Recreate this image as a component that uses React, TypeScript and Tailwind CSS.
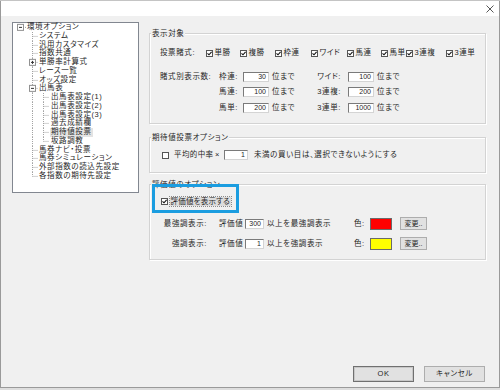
// 環境オプション dialog: tree on the left, three option groups on the right

type TreeItem = {
  label: string
  level: 0 | 1 | 2
  exp?: 'plus' | 'minus'
  last?: boolean
  selected?: boolean
}

const TREE: TreeItem[] = [
  { label: '環境オプション', level: 0, exp: 'minus' },
  { label: 'システム', level: 1 },
  { label: '汎用カスタマイズ', level: 1 },
  { label: '指数共通', level: 1 },
  { label: '単勝率計算式', level: 1, exp: 'plus' },
  { label: 'レース一覧', level: 1 },
  { label: 'オッズ設定', level: 1 },
  { label: '出馬表', level: 1, exp: 'minus' },
  { label: '出馬表設定(1)', level: 2 },
  { label: '出馬表設定(2)', level: 2 },
  { label: '出馬表設定(3)', level: 2 },
  { label: '過去成績欄', level: 2 },
  { label: '期待値投票', level: 2, selected: true },
  { label: '坂路調教', level: 2, last: true },
  { label: '馬券ナビ・投票', level: 1 },
  { label: '馬券シミュレーション', level: 1 },
  { label: '外部指数の読込先設定', level: 1 },
  { label: '各指数の期待先設定', level: 1, last: true },
]

// checkbox x-slots for the 投票賭式 row (widths in px)
const BET_TYPES = [
  { label: '単勝', w: 34 },
  { label: '複勝', w: 35 },
  { label: '枠連', w: 36 },
  { label: 'ワイド', w: 36 },
  { label: '馬連', w: 34 },
  { label: '馬単', w: 25 },
  { label: '3連複', w: 40 },
  { label: '3連単', w: 30 },
]

const LIMITS = [
  { a: '枠連:', av: '30', b: 'ワイド:', bv: '100' },
  { a: '馬連:', av: '100', b: '3連複:', bv: '200' },
  { a: '馬単:', av: '200', b: '3連単:', bv: '1000' },
]

const ROW_H = 8.75
const LINE = '#a3a3a3'

// dotted tree connectors + expander box
function Guide({ item }: { item: TreeItem }) {
  const m = ROW_H / 2
  const w = item.level === 0 ? 13 : item.level === 1 ? 25 : 37
  const box = (cx: number, kind: 'plus' | 'minus') => (
    <g>
      <rect x={cx - 3} y={m - 3} width={6} height={6} fill="#fff" stroke="#919191" strokeWidth={1} />
      <line x1={cx - 1.5} y1={m} x2={cx + 1.5} y2={m} stroke="#333" strokeWidth={1} />
      {kind === 'plus' && <line x1={cx} y1={m - 1.5} x2={cx} y2={m + 1.5} stroke="#333" strokeWidth={1} />}
    </g>
  )
  return (
    <svg width={w} height={ROW_H} className="shrink-0 block">
      {item.level === 0 && (
        <>
          <line x1={10} y1={m} x2={13} y2={m} stroke={LINE} strokeDasharray="1 1" />
          {box(7.5, item.exp ?? 'minus')}
        </>
      )}
      {item.level === 1 && (
        <>
          <line x1={19.5} y1={0} x2={19.5} y2={item.last ? m : ROW_H} stroke={LINE} strokeDasharray="1 1" />
          <line x1={19.5} y1={m} x2={24.5} y2={m} stroke={LINE} strokeDasharray="1 1" />
          {item.exp && box(19.5, item.exp)}
        </>
      )}
      {item.level === 2 && (
        <>
          <line x1={19.5} y1={0} x2={19.5} y2={ROW_H} stroke={LINE} strokeDasharray="1 1" />
          <line x1={30.5} y1={0} x2={30.5} y2={item.last ? m : ROW_H} stroke={LINE} strokeDasharray="1 1" />
          <line x1={30.5} y1={m} x2={36} y2={m} stroke={LINE} strokeDasharray="1 1" />
        </>
      )}
    </svg>
  )
}

function Check() {
  return (
    <span className="w-[7px] h-[7px] shrink-0 border border-[#555] bg-white flex items-center justify-center">
      <svg width="5" height="5" viewBox="0 0 5 5">
        <path d="M0.5 2.3 L2 3.8 L4.6 0.8" fill="none" stroke="#111" strokeWidth="1.1" />
      </svg>
    </span>
  )
}

function NumBox({ value, w }: { value: string; w: string }) {
  return (
    <div className={`${w} h-[10px] shrink-0 bg-white border border-[#7a7a7a] border-r-[#d4d4d4] border-b-[#d4d4d4] text-right pr-[2px] leading-[8px] text-[7px] tracking-normal`}>
      {value}
    </div>
  )
}

function GroupLabel({ children }: { children: React.ReactNode }) {
  return (
    <div className="-mt-[6px] ml-[1px] px-[1px] w-fit h-[11px] leading-[11px] bg-[#f0f0f0] whitespace-nowrap">
      {children}
    </div>
  )
}

function ChangeButton() {
  return (
    <div className="ml-[8px] w-[27px] h-[13px] shrink-0 bg-[#e1e1e1] border border-[#adadad] flex items-center justify-center leading-[9px] text-[7px] tracking-normal">
      変更..
    </div>
  )
}

export default function App() {
  return (
    <div className="w-[500px] h-[390px] flex flex-col bg-[#e6e6e6] font-['Liberation_Sans','Noto_Sans_CJK_JP',sans-serif] [font-feature-settings:'palt'] text-[7.5px] leading-[10px] tracking-[0.6px] text-[#262626]">
      <div className="h-[1px] bg-[#c4c4c4]" />

      {/* window */}
      <div className="flex-1 flex flex-col border-x border-b border-[#9a9a9a] bg-[#f0f0f0]">
        {/* title bar */}
        <div className="h-[15px] bg-white flex items-center justify-end pr-[5px]">
          <svg width="8" height="8" viewBox="0 0 8 8">
            <path d="M0.5 0.5 L7.5 7.5 M7.5 0.5 L0.5 7.5" stroke="#444" strokeWidth="0.9" />
          </svg>
        </div>

        <div className="flex-1 flex flex-col pl-[11px] pr-[14px] pt-[6px] pb-[5px]">
          <div className="flex">
            {/* tree */}
            <div className="w-[127px] h-[171px] shrink-0 border border-[#828790] bg-white">
              {TREE.map((item) => (
                <div key={item.label} className="flex items-center h-[8.75px]">
                  <Guide item={item} />
                  <span
                    className={`whitespace-nowrap leading-[8.75px] px-[1px] ${item.selected ? 'bg-[#e3e3e3]' : ''}`}
                  >
                    {item.label}
                  </span>
                </div>
              ))}
            </div>

            {/* option groups */}
            <div className="ml-[10px] pt-[11px] w-[337px] shrink-0 flex flex-col">
              {/* 表示対象 */}
              <div className="h-[91px] border border-[#d3d3d3] shadow-[inset_1px_1px_0_#ffffff,1px_1px_0_#ffffff] flex flex-col">
                <GroupLabel>表示対象</GroupLabel>
                <div className="mt-[9px] pl-[10px] h-[10px] flex items-center">
                  <span className="w-[46px] shrink-0 whitespace-nowrap">投票賭式:</span>
                  {BET_TYPES.map((b) => (
                    <div key={b.label} className="flex items-center gap-[1.5px] shrink-0" style={{ width: b.w }}>
                      <Check />
                      <span className="whitespace-nowrap">{b.label}</span>
                    </div>
                  ))}
                </div>
                {LIMITS.map((r, i) => (
                  <div
                    key={r.a}
                    className={`pl-[10px] h-[10px] flex items-center ${i === 0 ? 'mt-[14px]' : i === 1 ? 'mt-[5px]' : 'mt-[6px]'}`}
                  >
                    <span className="w-[48px] shrink-0 whitespace-nowrap">{i === 0 ? '賭式別表示数:' : ''}</span>
                    <span className="w-[30px] shrink-0 text-right whitespace-nowrap">{r.a}</span>
                    <div className="ml-[5px]">
                      <NumBox value={r.av} w="w-[26px]" />
                    </div>
                    <span className="w-[42px] shrink-0 pl-[3px] whitespace-nowrap">位まで</span>
                    <span className="w-[30px] shrink-0 text-right whitespace-nowrap">{r.b}</span>
                    <div className="ml-[7px]">
                      <NumBox value={r.bv} w="w-[26px]" />
                    </div>
                    <span className="pl-[3px] whitespace-nowrap">位まで</span>
                  </div>
                ))}
              </div>

              {/* 期待値投票オプション */}
              <div className="mt-[13px] h-[36px] border border-[#d3d3d3] shadow-[inset_1px_1px_0_#ffffff,1px_1px_0_#ffffff] flex flex-col">
                <GroupLabel>期待値投票オプション</GroupLabel>
                <div className="mt-[7px] pl-[12px] h-[10px] flex items-center">
                  <span className="w-[7px] h-[7px] shrink-0 border border-[#555] bg-white" />
                  <span className="ml-[5px] w-[40px] shrink-0 whitespace-nowrap tracking-[0.4px]">平均的中率</span>
                  <span className="w-[10px] shrink-0 pl-[1px]">×</span>
                  <NumBox value="1" w="w-[24px]" />
                  <span className="ml-[6px] whitespace-nowrap">未満の買い目は、選択できないようにする</span>
                </div>
              </div>

              {/* 評価値のオプション */}
              <div className="relative mt-[11px] h-[76px] border border-[#d3d3d3] shadow-[inset_1px_1px_0_#ffffff,1px_1px_0_#ffffff] flex flex-col">
                <GroupLabel>評価値のオプション</GroupLabel>
                <div className="mt-[6px] pl-[11px] h-[10px] flex items-center">
                  <Check />
                  <span className="ml-[1.5px] px-[1px] bg-[#dcdcdc] outline outline-1 outline-dotted outline-[#8a8a8a] whitespace-nowrap leading-[9px] tracking-[0.2px]">
                    評価値を表示する
                  </span>
                </div>
                {[
                  { label: '最強調表示:', v: '300', text: '以上を最強調表示', color: 'bg-[#ff0000]', mt: 'mt-[11px]' },
                  { label: '強調表示:', v: '1', text: '以上を強調表示', color: 'bg-[#ffff00]', mt: 'mt-[7px]' },
                ].map((r) => (
                  <div key={r.label} className={`${r.mt} pl-[11px] h-[13px] flex items-center`}>
                    <span className="w-[46px] shrink-0 text-right whitespace-nowrap">{r.label}</span>
                    <span className="ml-[12px] w-[26px] shrink-0 whitespace-nowrap">評価値</span>
                    <NumBox value={r.v} w="w-[19px]" />
                    <span className="ml-[3px] w-[87px] shrink-0 whitespace-nowrap">{r.text}</span>
                    <span className="w-[16px] shrink-0">色:</span>
                    <div className={`w-[22px] h-[12px] shrink-0 border border-[#6a6a6a] ${r.color}`} />
                    <ChangeButton />
                  </div>
                ))}

                {/* blue callout frame over the checkbox */}
                <div className="absolute -top-[1px] left-[2px] w-[87px] h-[29px] border-[3px] border-[#1b9de0]" />
              </div>
            </div>
          </div>

          {/* footer buttons */}
          <div className="mt-auto flex justify-end gap-[10px]">
            <div className="w-[61px] h-[16px] bg-[#e1e1e1] border border-[#707070] shadow-[inset_0_0_0_1px_#c8c8c8] flex items-center justify-center">
              OK
            </div>
            <div className="w-[61px] h-[16px] bg-[#e1e1e1] border border-[#adadad] flex items-center justify-center">
              キャンセル
            </div>
          </div>
        </div>
      </div>

      <div className="h-[2px] bg-[#dedede]" />
    </div>
  )
}
